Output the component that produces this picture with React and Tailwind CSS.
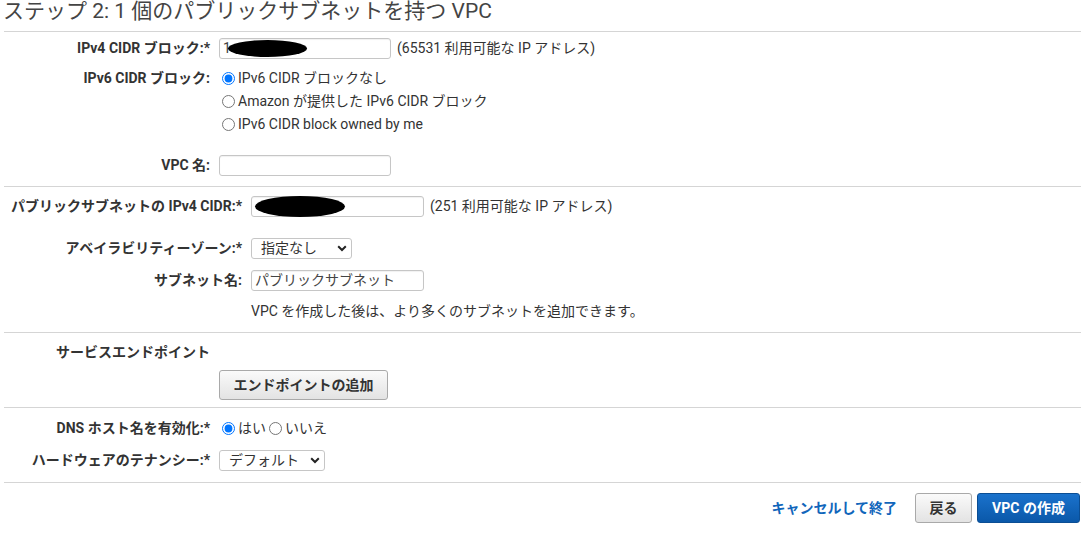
import React from "react";

const FONT = "font-['Roboto','Noto_Sans_CJK_JP',sans-serif]";

function Label({ children, w }) {
  return (
    <div className={`${w} shrink-0 text-right font-bold text-[14px] text-[#333] whitespace-nowrap`}>{children}</div>
  );
}

function TextBox({ w, value, blob }) {
  return (
    <div className={`relative ${w} h-[21px] border border-[#c6c6c6] rounded-[3px] bg-white flex items-center px-[3px] text-[14px] text-[#444] shadow-[inset_0_1px_1px_rgba(0,0,0,0.06)]`}>
      <span className="whitespace-nowrap">{value}</span>
      {blob}
    </div>
  );
}

function Chevron() {
  return (
    <svg width="10" height="7" viewBox="0 0 10 7" className="shrink-0">
      <path d="M1.2 1.3 L5 5 L8.8 1.3" fill="none" stroke="#222" strokeWidth="2" />
    </svg>
  );
}

function SelectBox({ w, value }) {
  return (
    <div className={`${w} h-[21px] border border-[#c6c6c6] rounded-[3px] bg-white flex items-center justify-between pl-[9px] pr-[4px] text-[14px] text-[#333]`}>
      <span className="whitespace-nowrap">{value}</span>
      <Chevron />
    </div>
  );
}

function Radio({ checked }) {
  return (
    <input
      type="radio"
      readOnly
      checked={checked}
      className="m-0 w-[13px] h-[13px] shrink-0 accent-[#0075ff]"
    />
  );
}

export default function App() {
  return (
    <div className={`w-[1081px] h-[534px] overflow-hidden bg-white text-[#333] text-[14px] ${FONT}`}>
      <h2 className="pl-[3px] h-[31px] text-[21px] leading-[23px] font-normal text-[#444] whitespace-nowrap">
        ステップ 2: 1 個のパブリックサブネットを持つ VPC
      </h2>

      <div className="ml-[4px]">
        {/* Section 1 */}
        <div className="border-t border-[#d5d5d5] pt-[6px] pb-[10px]">
          <div className="flex items-center gap-[9px] h-[21px]">
            <Label w="w-[206px]">IPv4 CIDR ブロック:*</Label>
            <TextBox
              w="w-[172px]"
              value="1"
              blob={<span className="absolute left-[8px] top-[1px] w-[79px] h-[17px] rounded-[50%] bg-black" />}
            />
            <span className="ml-[-3px] whitespace-nowrap">(65531 利用可能な IP アドレス)</span>
          </div>
          <div className="flex gap-[9px] mt-[8px]">
            <Label w="w-[206px] leading-[23px]">IPv6 CIDR ブロック:</Label>
            <div className="flex flex-col">
              <label className="flex items-center gap-[3px] h-[23px] ml-[3px]"><Radio checked /> <span>IPv6 CIDR ブロックなし</span></label>
              <label className="flex items-center gap-[3px] h-[23px] ml-[3px]"><Radio /> <span>Amazon が提供した IPv6 CIDR ブロック</span></label>
              <label className="flex items-center gap-[3px] h-[23px] ml-[3px]"><Radio /> <span>IPv6 CIDR block owned by me</span></label>
            </div>
          </div>
          <div className="flex items-center gap-[9px] h-[21px] mt-[19px]">
            <Label w="w-[206px]">VPC 名:</Label>
            <TextBox w="w-[172px]" value="" />
          </div>
        </div>

        {/* Section 2 */}
        <div className="border-t border-[#d5d5d5] pt-[9px] pb-[12px]">
          <div className="flex items-center gap-[9px] h-[21px]">
            <Label w="w-[238px]">パブリックサブネットの IPv4 CIDR:*</Label>
            <TextBox
              w="w-[173px]"
              value=""
              blob={<span className="absolute left-[3px] top-[-1px] w-[90px] h-[21px] rounded-[50%] bg-black" />}
            />
            <span className="ml-[-3px] whitespace-nowrap">(251 利用可能な IP アドレス)</span>
          </div>
          <div className="flex items-center gap-[9px] h-[21px] mt-[21px]">
            <Label w="w-[238px]">アベイラビリティーゾーン:*</Label>
            <SelectBox w="w-[101px]" value="指定なし" />
          </div>
          <div className="flex items-center gap-[9px] h-[21px] mt-[11px]">
            <Label w="w-[238px]">サブネット名:</Label>
            <TextBox w="w-[173px]" value="パブリックサブネット" />
          </div>
          <div className="flex gap-[9px] h-[18px] mt-[11px] items-center">
            <div className="w-[238px] shrink-0" />
            <span className="whitespace-nowrap">VPC を作成した後は、より多くのサブネットを追加できます。</span>
          </div>
        </div>

        {/* Section 3 */}
        <div className="border-t border-[#d5d5d5] pt-[10px] pb-[7px]">
          <div className="h-[18px] flex items-center pl-[52px] font-bold whitespace-nowrap">サービスエンドポイント</div>
          <div className="flex gap-[9px] mt-[9px]">
            <div className="w-[206px] shrink-0" />
            <button className="w-[169px] h-[30px] rounded-[3px] border border-[#a9a9a9] bg-gradient-to-b from-[#fafafa] to-[#e3e3e3] font-bold text-[14px] text-[#333]">
              エンドポイントの追加
            </button>
          </div>
        </div>

        {/* Section 4 */}
        <div className="border-t border-[#d5d5d5] pt-[10px] pb-[11px]">
          <div className="flex items-center gap-[9px] h-[21px]">
            <Label w="w-[206px]">DNS ホスト名を有効化:*</Label>
            <div className="flex items-center gap-[3px] ml-[3px]">
              <Radio checked />
              <span>はい</span>
              <Radio />
              <span>いいえ</span>
            </div>
          </div>
          <div className="flex items-center gap-[9px] h-[21px] mt-[11px]">
            <Label w="w-[206px]">ハードウェアのテナンシー:*</Label>
            <SelectBox w="w-[106px]" value="デフォルト" />
          </div>
        </div>

        {/* Footer */}
        <div className="border-t border-[#d5d5d5] pt-[10px] flex items-center justify-end pr-[1px]">
          <span className="text-[#1166bb] font-bold mr-[18px] whitespace-nowrap">キャンセルして終了</span>
          <button className="w-[57px] h-[30px] rounded-[3px] border border-[#a9a9a9] bg-gradient-to-b from-[#fafafa] to-[#e3e3e3] font-bold text-[#333]">
            戻る
          </button>
          <button className="ml-[5px] w-[103px] h-[30px] rounded-[3px] border border-[#0b4e94] bg-gradient-to-b from-[#1a72cc] to-[#0a58a9] font-bold text-white">
            VPC の作成
          </button>
        </div>
      </div>
    </div>
  );
}
